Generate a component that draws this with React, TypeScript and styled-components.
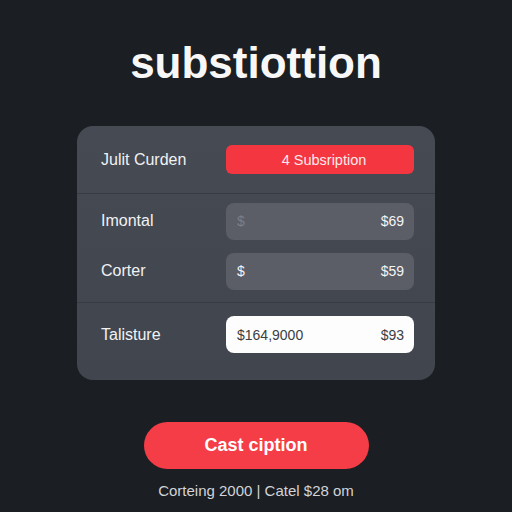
import styled, { createGlobalStyle } from 'styled-components';

const GlobalStyle = createGlobalStyle`
  html, body {
    margin: 0;
    padding: 0;
    background: #1b1e23;
  }

  body {
    font-family: 'Liberation Sans', Arial, sans-serif;
  }
`;

const Page = styled.div`
  width: 512px;
  height: 512px;
  display: flex;
  flex-direction: column;
  align-items: center;
  background: #1b1e23;
  color: #ffffff;
`;

const Title = styled.h1`
  margin: 37px 0 0;
  height: 52px;
  line-height: 52px;
  font-size: 44px;
  font-weight: 700;
  color: #f7f7f8;
`;

const Card = styled.div`
  margin-top: 37px;
  width: 358px;
  height: 254px;
  box-sizing: border-box;
  border-radius: 16px;
  background: linear-gradient(180deg, #464a52 0%, #41454d 100%);
  display: flex;
  flex-direction: column;
`;

const Section = styled.div<{ $top: number; $bottom: number; $gap?: number }>`
  display: flex;
  flex-direction: column;
  gap: ${(p) => p.$gap ?? 0}px;
  padding: ${(p) => p.$top}px 21px ${(p) => p.$bottom}px 24px;
`;

const Divider = styled.div`
  height: 1px;
  background: #383b42;
`;

const Row = styled.div`
  display: flex;
  align-items: center;
  justify-content: space-between;
`;

const Label = styled.span`
  font-size: 16px;
  color: #f1f2f4;
`;

const PlanPill = styled.div`
  width: 188px;
  height: 29px;
  border-radius: 6px;
  background: #f43641;
  display: flex;
  align-items: center;
  justify-content: center;
  padding-left: 8px;
  box-sizing: border-box;
  font-size: 14.5px;
  color: #fbe9ea;
`;

const Field = styled.div<{ $light?: boolean }>`
  width: 188px;
  height: 37px;
  box-sizing: border-box;
  border-radius: 8px;
  padding: 0 10px 0 11px;
  display: flex;
  align-items: center;
  justify-content: space-between;
  font-size: 14px;
  background: ${(p) => (p.$light ? '#fdfdfd' : '#5b5e66')};
  color: ${(p) => (p.$light ? '#3a3d44' : '#f4f4f6')};
`;

const Currency = styled.span<{ $faded?: boolean }>`
  color: ${(p) => (p.$faded ? '#7c7f87' : 'inherit')};
`;

const Amount = styled.span``;

const CtaButton = styled.button`
  margin-top: 42px;
  width: 225px;
  height: 47px;
  border: none;
  border-radius: 24px;
  background: #f43d47;
  color: #ffffff;
  font-family: 'Liberation Sans', Arial, sans-serif;
  font-size: 18px;
  font-weight: 700;
`;

const Footnote = styled.p`
  margin: 13px 0 0;
  font-size: 15px;
  color: #d2d4d8;
`;

export default function App() {
  return (
    <>
      <GlobalStyle />
      <Page>
        <Title>substiottion</Title>
        <Card>
          <Section $top={19} $bottom={19}>
            <Row>
              <Label>Julit Curden</Label>
              <PlanPill>4 Subsription</PlanPill>
            </Row>
          </Section>
          <Divider />
          <Section $top={9} $bottom={12} $gap={13}>
            <Row>
              <Label>Imontal</Label>
              <Field>
                <Currency $faded>$</Currency>
                <Amount>$69</Amount>
              </Field>
            </Row>
            <Row>
              <Label>Corter</Label>
              <Field>
                <Currency>$</Currency>
                <Amount>$59</Amount>
              </Field>
            </Row>
          </Section>
          <Divider />
          <Section $top={14} $bottom={27}>
            <Row>
              <Label>Talisture</Label>
              <Field $light>
                <Currency>$164,9000</Currency>
                <Amount>$93</Amount>
              </Field>
            </Row>
          </Section>
        </Card>
        <CtaButton>Cast ciption</CtaButton>
        <Footnote>Corteing 2000 | Catel $28 om</Footnote>
      </Page>
    </>
  );
}
